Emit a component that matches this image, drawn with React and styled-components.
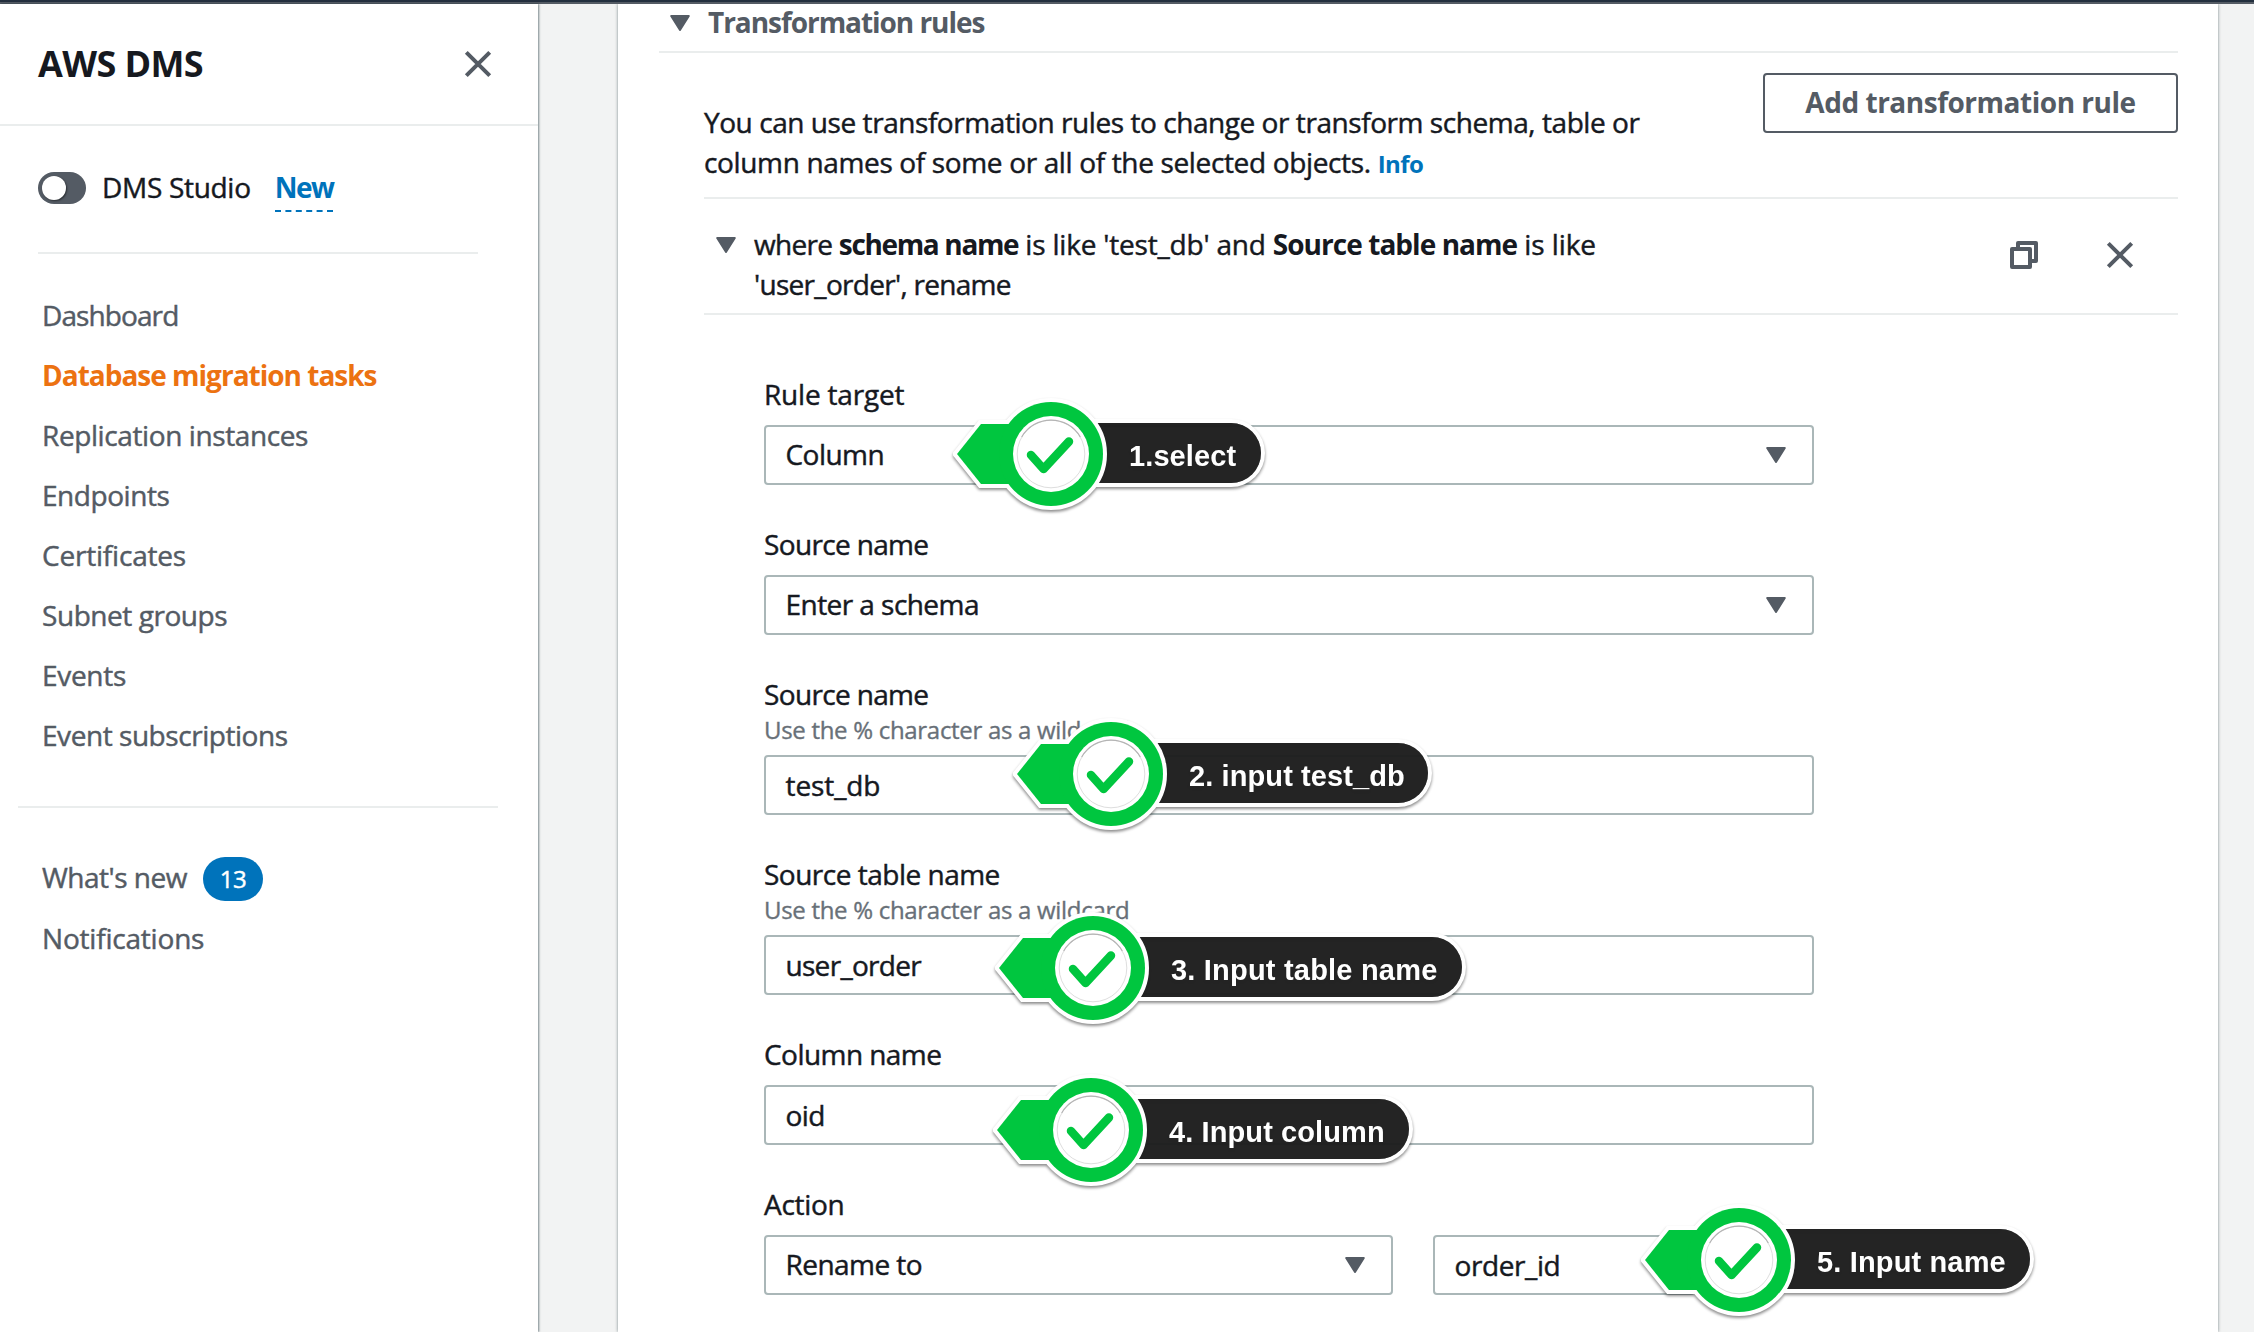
import React from "react";
import styled, { createGlobalStyle, css } from "styled-components";

const Global = createGlobalStyle`
  * { box-sizing: border-box; }
  body { margin: 0; background: #f2f3f3; overflow: hidden; }
  h1, h2, p { margin: 0; }
  button { font: inherit; color: inherit; letter-spacing: inherit; }
`;

const bold = css`
  font-weight: 700;
  -webkit-text-stroke: 0;
`;
const tracking = css`
  letter-spacing: ${(p) => (p.$ls === undefined ? -0.55 : p.$ls)}px;
`;

const Page = styled.div`
  position: relative;
  width: 2254px;
  height: 1332px;
  overflow: hidden;
  display: flex;
  flex-direction: column;
  background: #f2f3f3;
  color: #16191f;
  font-family: "Open Sans", "Noto Sans", sans-serif;
  font-size: 28px;
  line-height: 40px;
  letter-spacing: -0.6px;
  -webkit-text-stroke: 0.45px currentColor;
`;
const TopBar = styled.div`
  height: 4px;
  flex: none;
  background: #232f3e;
  border-bottom: 2px solid #545b64;
`;
const Body = styled.div`
  flex: 1;
  min-height: 0;
  display: flex;
`;

const Sidebar = styled.aside`
  width: 538px;
  flex: none;
  background: #fff;
  box-shadow: 1px 0 2px rgba(0, 28, 36, 0.5);
`;
const SideHeader = styled.header`
  height: 122px;
  display: flex;
  justify-content: space-between;
  align-items: center;
  padding: 0 46px 0 38px;
  border-bottom: 2px solid #eaeded;
`;
const Title = styled.h1`
  ${bold}
  font-size: 36px;
  letter-spacing: -0.6px;
`;
const Studio = styled.div`
  margin: 0 60px 0 38px;
  height: 128px;
  display: flex;
  align-items: center;
  border-bottom: 2px solid #eaeded;
`;
const Toggle = styled.span`
  width: 48px;
  height: 32px;
  margin-top: -2px;
  border-radius: 16px;
  padding: 4px;
  background: #545b64;
  &::after {
    content: "";
    display: block;
    width: 24px;
    height: 24px;
    border-radius: 50%;
    background: #fff;
    box-shadow: 1px 1px 2px rgba(0, 0, 0, 0.5);
  }
`;
const StudioLabel = styled.span`
  margin: -4px 24px 0 16px;
  letter-spacing: -0.3px;
`;
const NewLink = styled.a`
  ${bold}
  color: #0073bb;
  letter-spacing: -1.5px;
  margin-top: 1px;
  padding-bottom: 3px;
  border-bottom: 2px dashed #0073bb;
`;
const Nav = styled.nav`
  display: flex;
  flex-direction: column;
  gap: ${(p) => (p.$second ? 21 : 20)}px;
  padding: ${(p) => (p.$second ? "49px 0 0 42px" : "41px 0 51px 42px")};
  color: #545b64;
`;
const NavItem = styled.a`
  display: flex;
  align-items: center;
  height: 40px;
  width: max-content;
  ${tracking}
  ${(p) => p.$active && css`${bold} color: #ec7211;`}
`;
const Rule = styled.div`
  height: 2px;
  background: #eaeded;
  margin: ${(p) => p.$margin};
`;
const Count = styled.span`
  margin: 4px 0 0 16px;
  width: 60px;
  height: 44px;
  border-radius: 22px;
  display: flex;
  align-items: center;
  justify-content: center;
  background: #0073bb;
  color: #fff;
  font-size: 24px;
`;

const Panel = styled.main`
  margin-left: 80px;
  width: 1600px;
  background: #fff;
  box-shadow: 0 0 3px rgba(0, 28, 36, 0.5);
  padding: 0 40px 0 41px;
  clip-path: inset(0 -8px 0 -8px);
`;
const SectionHead = styled.header`
  height: 49px;
  display: flex;
  align-items: flex-start;
  padding-left: 11px;
  gap: 18px;
  border-bottom: 2px solid #eaeded;
`;
const SectionTitle = styled.h2`
  ${bold}
  font-size: 28px;
  margin-top: -2px;
  color: #545b64;
  letter-spacing: -1.05px;
`;
const Section = styled.section`
  margin-left: 45px;
`;
const Intro = styled.div`
  height: 146px;
  display: flex;
  justify-content: space-between;
  align-items: flex-start;
  padding-top: 20px;
  border-bottom: 2px solid #eaeded;
`;
const IntroText = styled.p`
  margin-top: 29px;
  white-space: nowrap;
`;
const T = styled.span`
  ${tracking}
`;
const B = styled.b`
  ${bold}
  ${tracking}
`;
const Info = styled.a`
  ${bold}
  color: #0073bb;
  font-size: 24px;
`;
const AddButton = styled.button`
  ${bold}
  width: 415px;
  height: 60px;
  border: 2px solid #545b64;
  border-radius: 4px;
  background: #fff;
  color: #545b64;
  letter-spacing: -0.48px;
  padding: 0 0 2px;
`;
const RuleHead = styled.div`
  height: 116px;
  display: flex;
  padding-left: 12px;
  border-bottom: 2px solid #eaeded;
`;
const RuleText = styled.p`
  margin: 25px auto 0 18px;
  white-space: nowrap;
`;
const Actions = styled.div`
  display: flex;
  gap: 68px;
  padding: 42px 44px 0 0;
`;

const Fields = styled.div`
  margin: 60px 0 0 60px;
  width: 1050px;
  display: flex;
  flex-direction: column;
  gap: 40px;
`;
const Label = styled.label`
  display: block;
  height: 40px;
  line-height: 38px;
  margin-bottom: 10px;
  ${tracking}
`;
const Hint = styled.div`
  height: 30px;
  margin: -10px 0 10px;
  font-size: 24px;
  line-height: 30px;
  color: #687078;
  letter-spacing: -0.3px;
  -webkit-text-stroke-width: 0.35px;
`;
const Row = styled.div`
  display: flex;
  gap: 40px;
`;
const Box = styled.div`
  width: ${(p) => p.$w || 1050}px;
  height: 60px;
  display: flex;
  align-items: center;
  justify-content: space-between;
  padding: 0 26px ${(p) => (p.$input ? "0" : "2px")} 19.5px;
  border: 2px solid #aab7b8;
  border-radius: 4px;
  background: #fff;
  ${tracking}
`;

const Marker = styled.div`
  position: absolute;
  left: ${(p) => p.$x - 98}px;
  top: ${(p) => p.$y - 60}px;
  height: 120px;
  display: flex;
  align-items: center;
  filter: drop-shadow(0 2px 1.5px rgba(0, 0, 0, 0.45));
  -webkit-text-stroke: 0;
`;
const Pill = styled.span`
  box-sizing: content-box;
  width: ${(p) => p.$w - 78}px;
  height: 60px;
  margin-left: 98px;
  padding-left: 78px;
  border-radius: 0 30px 30px 0;
  box-shadow: 0 0 0 4px #fff;
  background: rgba(29, 29, 29, 0.95);
  color: #fff;
  font: 700 29px/66px "Liberation Sans", Arial, sans-serif;
  letter-spacing: ${(p) => p.$ls}px;
  white-space: nowrap;
`;
const Badge = styled.svg`
  position: absolute;
  left: 0;
  top: 0.5px;
`;

const Icon = styled.svg`
  display: block;
  flex: none;
  margin-top: ${(p) => p.$top || 0}px;
`;

const Caret = ({ top = 2 }) => (
  <Icon width="20" height="16" viewBox="0 0 20 16" $top={top}>
    <path d="M1.2 1h17.6L10 15z" fill="#545b64" stroke="#545b64" strokeWidth="2" strokeLinejoin="round" />
  </Icon>
);
const Close = () => (
  <Icon width="28" height="28" viewBox="0 0 28 28">
    <path d="M2.3 2.3l23.4 23.4M25.7 2.3L2.3 25.7" stroke="#545b64" strokeWidth="4" />
  </Icon>
);
const Copy = () => (
  <Icon width="28" height="28" viewBox="0 0 28 28" fill="none" stroke="#545b64" strokeWidth="4" strokeLinejoin="round">
    <path d="M8 8V2h18v18h-6" />
    <path d="M2 8h18v18H2z" />
  </Icon>
);

const Step = ({ x, y, w, ls = 0.1, children }) => (
  <Marker $x={x} $y={y}>
    <Pill $w={w} $ls={ls}>{children}</Pill>
    <Badge width="160" height="120" viewBox="-98 -60 160 120">
      <g fill="#00c63f" stroke="#fff" strokeWidth="8">
        <path d="M-94 0L-70 -30H0V30H-70z" />
        <circle r="52" />
      </g>
      <path d="M-94 0L-70 -30H0V30H-70z" fill="#00c63f" />
      <circle r="52" fill="#00c63f" />
      <circle r="38" fill="#fff" />
      <circle r="33.8" fill="#fff" stroke="#dedede" strokeWidth="1" />
      <path d="M-29.3 -17A33.8 33.8 0 0 1 29.3 -17" fill="none" stroke="#b4b4b4" strokeWidth="1.2" />
      <path d="M-20 1L-7.5 15L18 -12.5" fill="none" stroke="#00c63f" strokeWidth="8.5" strokeLinecap="round" strokeLinejoin="round" />
    </Badge>
  </Marker>
);

const links = [
  { text: "Dashboard", ls: -0.9 },
  { text: "Database migration tasks", ls: -1, active: true },
  { text: "Replication instances", ls: -0.4 },
  { text: "Endpoints", ls: -0.45 },
  { text: "Certificates", ls: -0.2 },
  { text: "Subnet groups", ls: -0.45 },
  { text: "Events", ls: -0.3 },
  { text: "Event subscriptions", ls: -0.45 },
];

export default function App() {
  return (
    <Page>
      <Global />
      <TopBar />
      <Body>
        <Sidebar>
          <SideHeader>
            <Title>AWS DMS</Title>
            <Close />
          </SideHeader>
          <Studio>
            <Toggle />
            <StudioLabel>DMS Studio</StudioLabel>
            <NewLink>New</NewLink>
          </Studio>
          <Nav>
            {links.map((l) => (
              <NavItem key={l.text} $ls={l.ls} $active={l.active}>{l.text}</NavItem>
            ))}
          </Nav>
          <Rule $margin="0 40px 0 18px" />
          <Nav $second>
            <NavItem $ls={-0.5}>What's new<Count>13</Count></NavItem>
            <NavItem $ls={-0.2}>Notifications</NavItem>
          </Nav>
        </Sidebar>
        <Panel>
          <SectionHead>
            <Caret top={11} />
            <SectionTitle>Transformation rules</SectionTitle>
          </SectionHead>
          <Section>
            <Intro>
              <IntroText>
                <T $ls={-0.44}>You can use transformation rules to change or transform schema, table or</T><br />
                <T $ls={-0.35}>column names of some or all of the selected objects. </T><Info>Info</Info>
              </IntroText>
              <AddButton>Add transformation rule</AddButton>
            </Intro>
            <RuleHead>
              <Caret top={38} />
              <RuleText>
                <T $ls={-0.7}>where </T><B $ls={-1.35}>schema name</B>
                <T $ls={-0.2}> is like 'test_db' and </T><B $ls={-0.95}>Source table name</B>
                <T $ls={-0.1}> is like</T><br />
                <T $ls={-0.7}>'user_order', rename</T>
              </RuleText>
              <Actions>
                <Copy />
                <Close />
              </Actions>
            </RuleHead>
            <Fields>
              <div>
                <Label $ls={-0.2}>Rule target</Label>
                <Box>Column<Caret /></Box>
              </div>
              <div>
                <Label $ls={-0.65}>Source name</Label>
                <Box>Enter a schema<Caret /></Box>
              </div>
              <div>
                <Label $ls={-0.65}>Source name</Label>
                <Hint>Use the % character as a wildcard</Hint>
                <Box $input $ls={-0.1}>test_db</Box>
              </div>
              <div>
                <Label $ls={-0.5}>Source table name</Label>
                <Hint>Use the % character as a wildcard</Hint>
                <Box $input $ls={-0.7}>user_order</Box>
              </div>
              <div>
                <Label>Column name</Label>
                <Box $input>oid</Box>
              </div>
              <div>
                <Label $ls={-0.3}>Action</Label>
                <Row>
                  <Box $w={629}>Rename to<Caret /></Box>
                  <Box $w={262} $input $ls={-0.4}>order_id</Box>
                </Row>
              </div>
            </Fields>
          </Section>
        </Panel>
      </Body>
      <Step x={1051} y={453} w={210}>1.select</Step>
      <Step x={1111} y={773} w={317}>2. input test_db</Step>
      <Step x={1093} y={967} w={369} ls={0.2}>3. Input table name</Step>
      <Step x={1091} y={1129} w={318}>4. Input column</Step>
      <Step x={1739} y={1259} w={291} ls={0.15}>5. Input name</Step>
    </Page>
  );
}
